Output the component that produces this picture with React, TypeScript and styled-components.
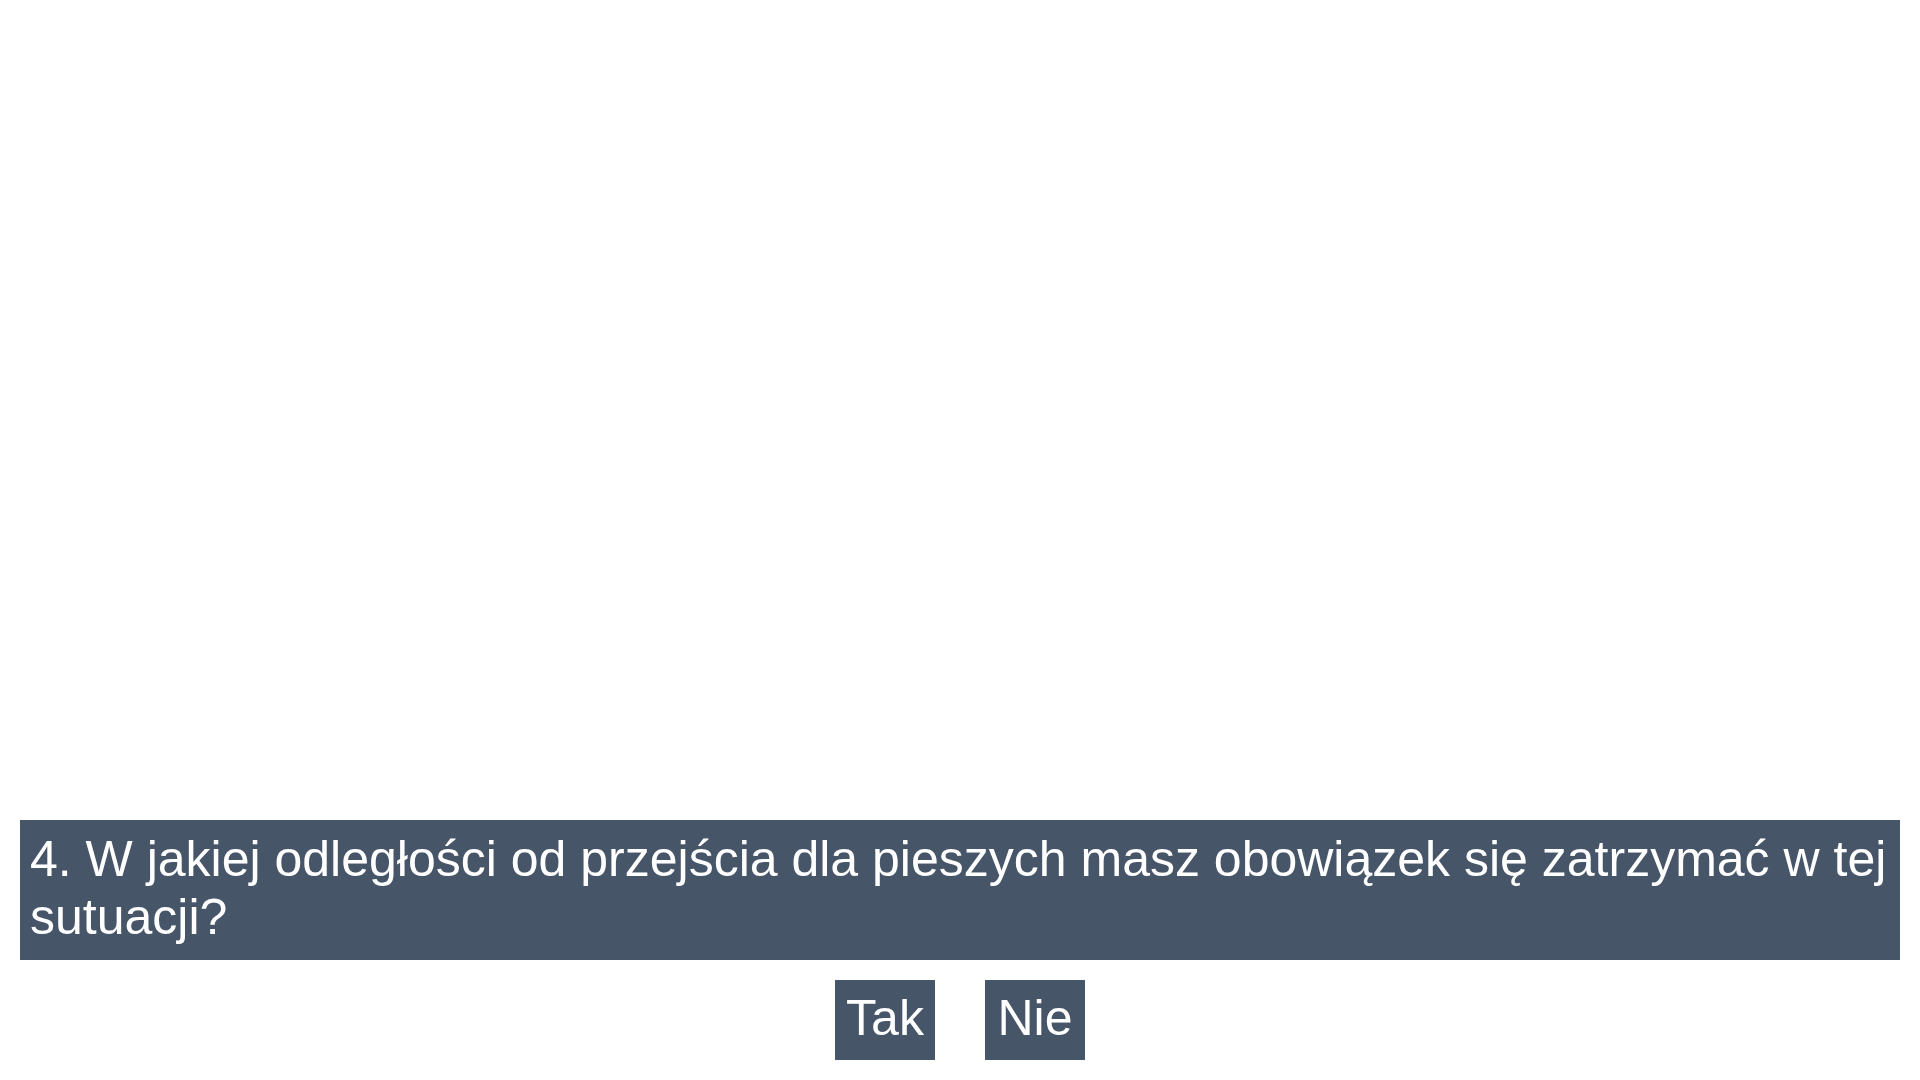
import styled, { createGlobalStyle } from 'styled-components';

const GlobalStyle = createGlobalStyle`
  html, body {
    margin: 0;
    padding: 0;
    background: #ffffff;
  }
  body {
    font-family: "Liberation Sans", Arial, sans-serif;
  }
`;

const Page = styled.div`
  height: 100vh;
  box-sizing: border-box;
  display: flex;
  flex-direction: column;
  padding: 0 20px 20px;
`;

const MediaArea = styled.div`
  flex: 1;
`;

const Question = styled.div`
  background-color: #475569;
  color: #ffffff;
  font-size: 50px;
  line-height: 58px;
  padding: 10px 10px 14px;
`;

const ButtonRow = styled.div`
  display: flex;
  justify-content: center;
  gap: 50px;
  margin-top: 20px;
`;

const AnswerButton = styled.button`
  width: 100px;
  height: 80px;
  padding: 0 0 4px;
  border: none;
  background-color: #475569;
  color: #ffffff;
  font-family: "Liberation Sans", Arial, sans-serif;
  font-size: 50px;
  line-height: normal;
  cursor: pointer;
`;

const answers = ['Tak', 'Nie'];

const App = () => {
  return (
    <>
      <GlobalStyle />
      <Page>
        <MediaArea />
        <Question>
          4. W jakiej odległości od przejścia dla pieszych masz obowiązek się zatrzymać w tej sutuacji?
        </Question>
        <ButtonRow>
          {answers.map((a) => (
            <AnswerButton key={a}>{a}</AnswerButton>
          ))}
        </ButtonRow>
      </Page>
    </>
  );
};

export default App;
